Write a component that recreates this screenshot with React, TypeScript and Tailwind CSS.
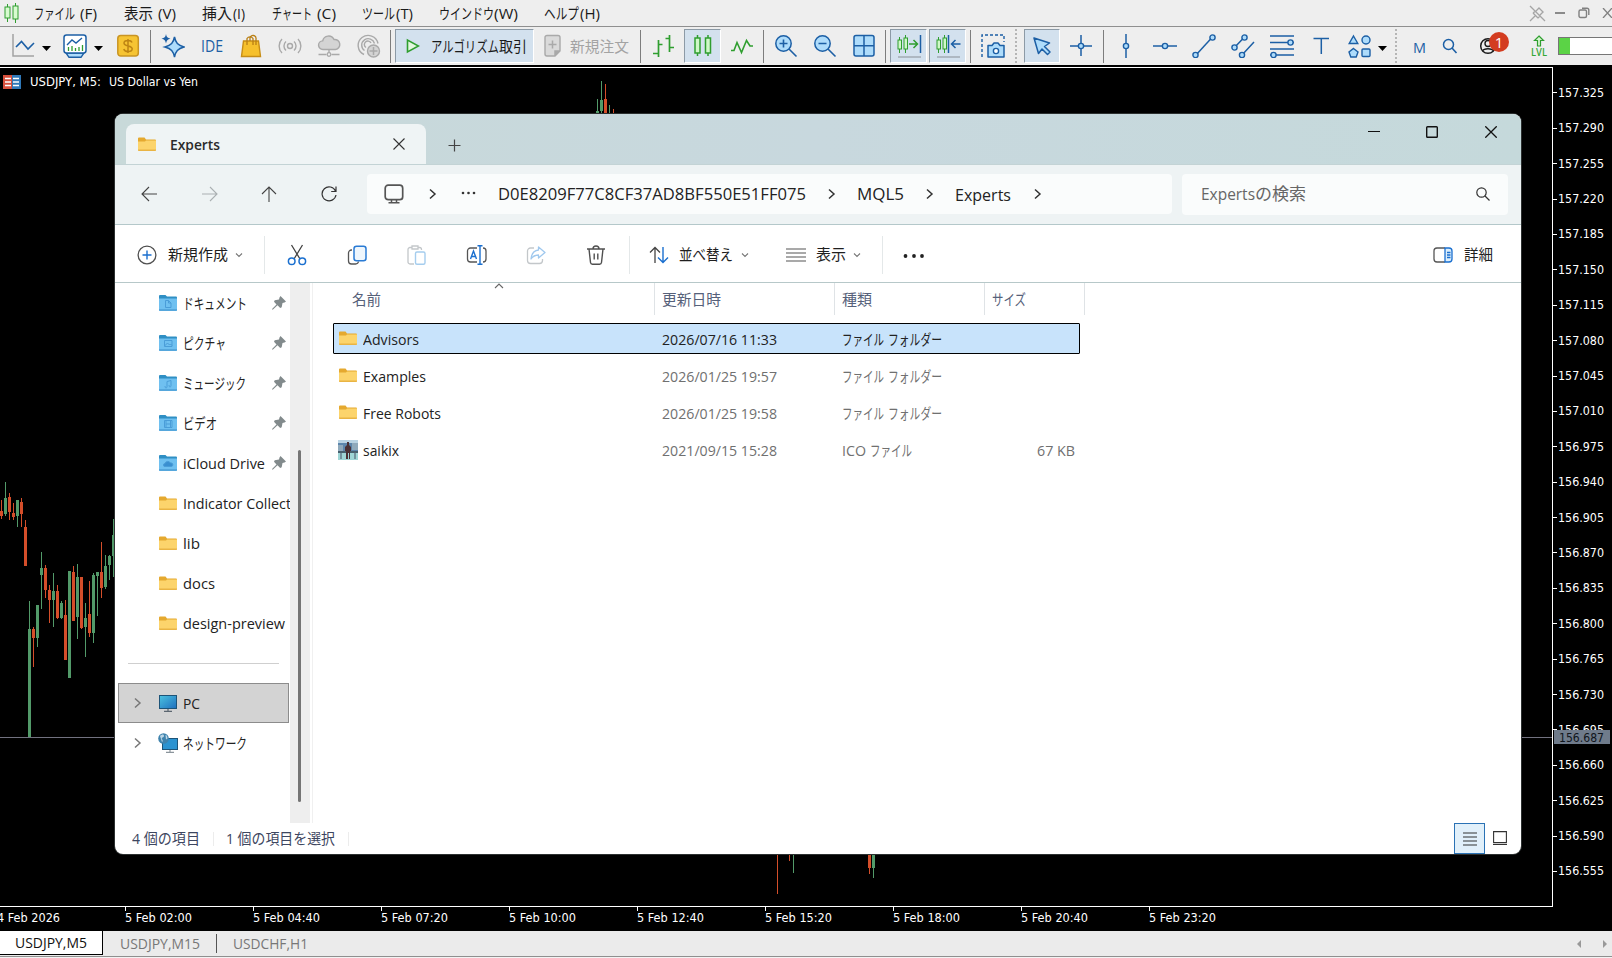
import { useLayoutEffect, useRef, useState } from 'react';
import type { ReactNode } from 'react';

// Squeezes a run of text into a fixed width, like the narrow UI kana on Windows
function Fit({ w, children, className = '' }: { w: number; children: ReactNode; className?: string }) {
  const ref = useRef<HTMLSpanElement>(null);
  const [scale, setScale] = useState(1);

  useLayoutEffect(() => {
    if (ref.current && ref.current.offsetWidth > 0) {
      setScale(w / ref.current.getBoundingClientRect().width);
    }
  }, [w]);

  return (
    <span className={`block shrink-0 whitespace-nowrap ${className}`} style={{ width: w }}>
      <span ref={ref} className="inline-block origin-left" style={{ transform: `scaleX(${scale})` }}>
        {children}
      </span>
    </span>
  );
}

function Ico({ children, className = '', w = 24, h = 24 }: { children: ReactNode; className?: string; w?: number; h?: number }) {
  return (
    <svg width={w} height={h} viewBox={`0 0 ${w} ${h}`} fill="none" className={`block shrink-0 ${className}`}>
      {children}
    </svg>
  );
}

const BLUE = '#1c5fa5';
const SKY = '#aedcfb';
const GREEN = '#2f9e2f';
const GRAY = '#a9a9a9';

/* ---------- terminal menu + toolbar ---------- */

const menus = [
  { ml: 'ml-[12px]', label: 'ファイル', w: 41, gap: 'ml-[5px]', key: '(F)', kw: 17 },
  { ml: 'ml-[27px]', label: '表示', w: 29, gap: 'ml-[5px]', key: '(V)', kw: 18 },
  { ml: 'ml-[26px]', label: '挿入', w: 30, gap: 'ml-[1px]', key: '(I)', kw: 12 },
  { ml: 'ml-[27px]', label: 'チャート', w: 40, gap: 'ml-[5px]', key: '(C)', kw: 19 },
  { ml: 'ml-[26px]', label: 'ツール', w: 33, gap: 'ml-[1px]', key: '(T)', kw: 17 },
  { ml: 'ml-[26px]', label: 'ウインドウ', w: 55, gap: 'ml-[0px]', key: '(W)', kw: 24 },
  { ml: 'ml-[26px]', label: 'ヘルプ', w: 35, gap: 'ml-[1px]', key: '(H)', kw: 20 },
];

function MenuBar() {
  return (
    <div className="flex h-[26px] shrink-0 items-center bg-[#eeeeee] text-[15px] text-[#1a1a1a]">
      <Ico w={16} h={20} className="ml-[4px]">
        <path d="M3.5 1v18M11.5 0v20" stroke={GREEN} />
        <rect x="1" y="4" width="5" height="11" fill="#d8fbd0" stroke={GREEN} />
        <rect x="9" y="3" width="5" height="13" fill="#d8fbd0" stroke={GREEN} />
      </Ico>
      <div className="flex items-center">
        {menus.map((m, i) => (
          <div key={m.label} className={`flex items-center ${i === 0 ? 'ml-[14px]' : m.ml}`}>
            <Fit w={m.w}>{m.label}</Fit>
            <Fit w={m.kw} className={m.gap}>{m.key}</Fit>
          </div>
        ))}
      </div>
      <div className="ml-auto flex items-center">
        <Ico w={17} h={17}>
          <path d="M1 1l15 15M1 16l5-5M4 8l5 5M9.500 2.500l5 5M7 6l3-3M11 10l3-3M6 6L4 8.500M11 11l-2 2" stroke="#a5a5a5" strokeWidth="1.300" />
        </Ico>
        <div className="ml-[9px] h-[1.500px] w-[10px] bg-[#8a8a8a]" />
        <Ico w={12} h={12} className="ml-[13px]">
          <rect x="1" y="3" width="7.500" height="7.500" rx="1.500" stroke="#808080" strokeWidth="1.400" />
          <path d="M4 1.200h5a1.800 1.800 0 0 1 1.800 1.800v5" stroke="#808080" strokeWidth="1.400" />
        </Ico>
        <Ico w={10} h={10} className="ml-[12px]">
          <path d="M1 0l9 10M10 0l-9 10" stroke="#808080" strokeWidth="1.300" />
        </Ico>
      </div>
    </div>
  );
}

const Sep = ({ ml }: { ml: string }) => <div className={`h-[33px] w-px shrink-0 bg-[#7d7d7d] ${ml}`} />;
const Dots = ({ ml }: { ml: string }) => (
  <div className={`h-[34px] w-0 shrink-0 border-l-2 border-dotted border-[#b5b5b5] ${ml}`} />
);
const Drop = ({ ml }: { ml: string }) => (
  <Ico w={9} h={5} className={`mt-[5px] ${ml}`}>
    <path d="M0 0h9L4.500 5z" fill="#000" />
  </Ico>
);
const Pressed = ({ children, className }: { children: ReactNode; className: string }) => (
  <div className={`flex h-[34px] shrink-0 items-center border border-t-[#8c9aa6] border-l-[#8c9aa6] border-r-white border-b-white bg-[#d3e1ee] ${className}`}>
    {children}
  </div>
);

function ToolBar() {
  return (
    <div className="flex h-[39px] shrink-0 items-center border-t border-[#8f8f8f] bg-[#eeeeee] text-[15px]">
      <Ico className="ml-[11px]">
        <path d="M2 0v22h21" stroke="#a3a3a3" strokeWidth="1.500" />
        <path d="M5 13l5.500-5.500 6.500 7.500 6-6" stroke={BLUE} strokeWidth="1.600" />
      </Ico>
      <Drop ml="ml-[7px]" />
      <Ico className="ml-[12px]">
        <path d="M3 19h18l-3 4.300H6z" fill={SKY} stroke={BLUE} strokeWidth="1.400" />
        <rect x="1" y="1" width="22" height="18" rx="2.500" fill="#fff" stroke={BLUE} strokeWidth="1.500" />
        <path d="M4 11l5-5 4 3 6-5" stroke={BLUE} strokeWidth="1.400" />
        <path d="M5.500 13v4M9 12v5M12.500 14v3M16 13v4M19.500 11v6" stroke={GREEN} strokeWidth="1.300" />
      </Ico>
      <Drop ml="ml-[7px]" />
      <Ico className="ml-[13px]">
        <rect x="1.800" y="1.500" width="20.500" height="20.500" rx="3" fill="#f6c433" stroke="#c99524" strokeWidth="1.500" />
        <path d="M12 5v14M16 8.500c-.5-1.400-2-2-4-2-2.200 0-4 .8-4 2.600 0 3.800 8.200 1.800 8.200 5.600 0 2-1.800 2.800-4.200 2.800-2.200 0-3.800-.8-4.200-2.500" stroke="#bd8413" strokeWidth="1.500" />
      </Ico>
      <Sep ml="ml-[10px]" />
      <Ico className="ml-[10px]">
        <path d="M13.500 3c1.200 6 3.200 8.300 9.500 10-6.300 1.700-8.300 4-9.500 10-1.200-6-3.200-8.300-9.500-10 6.300-1.700 8.300-4 9.500-10z" fill={SKY} stroke={BLUE} strokeWidth="1.500" />
        <path d="M5 0c.5 3 1.500 4 4.500 4.700C6.500 5.400 5.500 6.500 5 9.500 4.500 6.500 3.500 5.400.5 4.700 3.500 4 4.500 3 5 0z" fill={BLUE} />
      </Ico>
      <Fit w={22} className="ml-[16px] text-[17px] text-[#1c5fa5]">IDE</Fit>
      <Ico className="ml-[16px]">
        <path d="M4.500 7h15l2 15.500h-19z" fill="#f6c02c" stroke="#c78d16" strokeWidth="1.400" />
        <path d="M8 11V4.500a3.500 3.500 0 0 1 6 0V11M11 7V4a3 3 0 0 1 6 1v6" stroke="#b97f14" strokeWidth="1.300" />
      </Ico>
      <Ico className="ml-[15px]">
        <circle cx="12" cy="12" r="2.500" stroke={GRAY} strokeWidth="1.400" />
        <path d="M8 7.500a6 6 0 0 0 0 9M16 7.500a6 6 0 0 1 0 9M4 5a10 10 0 0 0 0 14M20 5a10 10 0 0 1 0 14" stroke={GRAY} strokeWidth="1.400" />
      </Ico>
      <Ico className="ml-[15px]">
        <path d="M6 15.500a4.300 4.300 0 0 1-.3-8.600A6 6 0 0 1 17 5.500a5 5 0 0 1 1.500 10z" fill="#d4d4d4" stroke={GRAY} strokeWidth="1.400" />
        <path d="M12 15.500V19M1.500 20.500h8M14.500 20.500h8" stroke={GRAY} strokeWidth="1.400" />
        <circle cx="12" cy="20.500" r="1.800" stroke={GRAY} strokeWidth="1.300" />
      </Ico>
      <Ico className="ml-[16px]">
        <path d="M21 9.500A10 10 0 1 0 7 20.500M17.500 9.500A6.500 6.500 0 1 0 7.500 16.500M14 9a3.500 3.500 0 1 0-5 4.500" stroke={GRAY} strokeWidth="1.400" />
        <circle cx="16.500" cy="17" r="6" fill="#d4d4d4" stroke={GRAY} strokeWidth="1.400" />
        <path d="M12.500 17h8M16.500 13v8" stroke={GRAY} strokeWidth="1.500" />
      </Ico>
      <Sep ml="ml-[9px]" />
      <Pressed className="ml-[4px] w-[139px] text-[#1a1a1a]">
        <Ico w={14} h={16} className="ml-[10px]">
          <path d="M1.500 2v12l11-6z" fill="#e3f8df" stroke={GREEN} strokeWidth="1.600" />
        </Ico>
        <Fit w={68} className="ml-[11px]">アルゴリズム</Fit>
        <Fit w={28}>取引</Fit>
      </Pressed>
      <Ico className="ml-[7px]">
        <path d="M6 1.500h11a2 2 0 0 1 2 2V17l-5 5H6a2 2 0 0 1-2-2V3.500a2 2 0 0 1 2-2z" fill="#dadada" stroke={GRAY} strokeWidth="1.400" />
        <path d="M19 17h-5v5M7.500 10.500h8M11.500 6.500v8" stroke={GRAY} strokeWidth="1.500" />
        <path d="M14 17h5l-5 5z" fill={GRAY} />
      </Ico>
      <Fit w={59} className="ml-[5px] text-[#a3a3a3]">新規注文</Fit>
      <Sep ml="ml-[11px]" />
      <Ico className="ml-[11px]">
        <path d="M6.500 6v17M1 19.500h5.500M6.500 10.500h4M17.500 1v17M13.500 4.500h4M17.500 13.500h4.500" stroke={GREEN} strokeWidth="1.700" />
      </Ico>
      <Pressed className="ml-[8px] w-[37px] justify-center">
        <Ico>
          <path d="M6.500 1v21M17 1v21" stroke={GREEN} strokeWidth="1.500" />
          <rect x="4" y="4" width="5" height="15" fill="#cff8c8" stroke={GREEN} strokeWidth="1.500" />
          <rect x="14.500" y="4" width="5" height="15" fill="#cff8c8" stroke={GREEN} strokeWidth="1.500" />
        </Ico>
      </Pressed>
      <Ico className="ml-[9px]">
        <path d="M1 16.500h3l3-8 4.500 10 5-12 3.500 5.500h3" stroke={GREEN} strokeWidth="1.600" />
      </Ico>
      <Sep ml="ml-[9px]" />
      <Ico className="ml-[10px]">
        <circle cx="9.500" cy="9.500" r="7.700" fill={SKY} stroke={BLUE} strokeWidth="1.500" />
        <path d="M15 15l7.500 7.500M5.500 9.500h8M9.500 5.500v8" stroke={BLUE} strokeWidth="1.600" />
      </Ico>
      <Ico className="ml-[15px]">
        <circle cx="9.500" cy="9.500" r="7.700" fill={SKY} stroke={BLUE} strokeWidth="1.500" />
        <path d="M15 15l7.500 7.500M5.500 9.500h8" stroke={BLUE} strokeWidth="1.600" />
      </Ico>
      <Ico className="ml-[15px]">
        <rect x="2" y="1.500" width="20" height="20.500" rx="2" fill={SKY} stroke={BLUE} strokeWidth="1.500" />
        <path d="M12 1.500V22M2 11.700h20" stroke={BLUE} strokeWidth="1.500" />
      </Ico>
      <Sep ml="ml-[9px]" />
      <Pressed className="ml-[4px] w-[37px] justify-center">
        <Ico w={26}>
          <path d="M3.500 3v16M9.500 1v18" stroke={GREEN} />
          <rect x="2" y="6" width="3.500" height="9" fill="#cff8c8" stroke={GREEN} />
          <rect x="8" y="4" width="3.500" height="11" fill="#cff8c8" stroke={GREEN} />
          <path d="M13 10h8M17.500 6l4 4-4 4" stroke={GREEN} strokeWidth="1.500" />
          <path d="M24.500 1v18" stroke={BLUE} strokeWidth="1.500" />
          <path d="M2 23h23" stroke="#9aa2aa" strokeWidth="1.300" />
        </Ico>
      </Pressed>
      <Pressed className="ml-[2px] w-[37px] justify-center">
        <Ico w={26}>
          <path d="M3.500 3v16M9.500 1v18" stroke={GREEN} />
          <rect x="2" y="6" width="3.500" height="9" fill="#cff8c8" stroke={GREEN} />
          <rect x="8" y="4" width="3.500" height="11" fill="#cff8c8" stroke={GREEN} />
          <path d="M13.500 1v18M17 10h8.500M20.500 6l-4 4 4 4" stroke={BLUE} strokeWidth="1.500" />
          <path d="M2 23h23" stroke="#9aa2aa" strokeWidth="1.300" />
        </Ico>
      </Pressed>
      <Sep ml="ml-[4px]" />
      <Ico className="ml-[10px]">
        <path d="M1 23V1h22v7" stroke={BLUE} strokeWidth="1.400" strokeDasharray="3 2" />
        <path d="M7 11.500h4l2-2.500h4l2 2.500h4v11.500H7z" fill={SKY} stroke={BLUE} strokeWidth="1.500" strokeLinejoin="round" />
        <circle cx="15" cy="17" r="2.600" fill="#fff" stroke={BLUE} strokeWidth="1.400" />
      </Ico>
      <Dots ml="ml-[10px]" />
      <Pressed className="ml-[7px] w-[36px] justify-center">
        <Ico>
          <path d="M4 4l15.500 5-5 3.500 5.500 5.500-2.500 2.500-5.500-5.500L8.500 19.500z" fill={SKY} stroke={BLUE} strokeWidth="1.500" strokeLinejoin="round" />
        </Ico>
      </Pressed>
      <Ico className="ml-[9px]">
        <path d="M12 1v21M1 12h22" stroke={BLUE} strokeWidth="1.500" />
        <circle cx="12" cy="12" r="2.600" fill={SKY} stroke={BLUE} strokeWidth="1.400" />
      </Ico>
      <Sep ml="ml-[10px]" />
      <Ico className="ml-[10px]">
        <path d="M12 0v24" stroke={BLUE} strokeWidth="1.500" />
        <circle cx="12" cy="12" r="2.600" fill={SKY} stroke={BLUE} strokeWidth="1.400" />
      </Ico>
      <Ico className="ml-[15px]">
        <path d="M0 12h24" stroke={BLUE} strokeWidth="1.500" />
        <circle cx="12" cy="12" r="2.600" fill={SKY} stroke={BLUE} strokeWidth="1.400" />
      </Ico>
      <Ico className="ml-[15px]">
        <path d="M4 21L20 3.500" stroke={BLUE} strokeWidth="1.500" />
        <circle cx="3.500" cy="21" r="2.600" fill={SKY} stroke={BLUE} strokeWidth="1.400" />
        <circle cx="20.500" cy="3.500" r="2.600" fill={SKY} stroke={BLUE} strokeWidth="1.400" />
      </Ico>
      <Ico className="ml-[15px]">
        <path d="M3.500 13.500L13.500 3M11 21L23 8" stroke={BLUE} strokeWidth="1.500" />
        <circle cx="3.500" cy="13.500" r="2.600" fill={SKY} stroke={BLUE} strokeWidth="1.400" />
        <circle cx="13.500" cy="3.500" r="2.600" fill={SKY} stroke={BLUE} strokeWidth="1.400" />
        <circle cx="11" cy="21" r="2.600" fill={SKY} stroke={BLUE} strokeWidth="1.400" />
      </Ico>
      <Ico className="ml-[15px]">
        <path d="M0 2h24M0 8.500h24M0 15h24M0 21h24" stroke={BLUE} strokeWidth="1.500" />
        <circle cx="20.500" cy="8.500" r="2.600" fill={SKY} stroke={BLUE} strokeWidth="1.400" />
        <circle cx="3.500" cy="21" r="2.600" fill={SKY} stroke={BLUE} strokeWidth="1.400" />
      </Ico>
      <Ico className="ml-[15px]">
        <path d="M4.500 4.500h15.500M12.300 4.500V20" stroke={BLUE} strokeWidth="1.500" />
      </Ico>
      <Ico className="ml-[15px]">
        <path d="M5.500 2l4.300 7.500H1.200z" fill={SKY} stroke={BLUE} strokeWidth="1.400" />
        <circle cx="18" cy="6" r="4" fill={SKY} stroke={BLUE} strokeWidth="1.400" />
        <path d="M5.500 14.500l4.500 3.500-1.800 5H2.800L1 18z" fill={SKY} stroke={BLUE} strokeWidth="1.400" />
        <rect x="14" y="15" width="8" height="7.500" rx="1" fill={SKY} stroke={BLUE} strokeWidth="1.400" />
      </Ico>
      <Drop ml="ml-[6px]" />
      <Dots ml="ml-[8px]" />
      <Fit w={13} className="mt-[3px] ml-[16px] text-[#1c5fa5]">M</Fit>
      <Ico w={16} h={16} className="ml-[16px]">
        <circle cx="6.500" cy="6.500" r="5" stroke={BLUE} strokeWidth="1.500" />
        <path d="M10 10l4.500 5" stroke={BLUE} strokeWidth="1.600" />
      </Ico>
      <div className="relative ml-[21px] h-[24px] w-[30px] shrink-0">
        <Ico w={18} className="mt-[1px]">
          <circle cx="9" cy="11" r="7.300" stroke="#1b1b1b" strokeWidth="1.500" />
          <circle cx="9" cy="8.500" r="3" stroke="#1b1b1b" strokeWidth="1.400" />
          <path d="M3.500 16c1.500-3 9.500-3 11 0" stroke="#1b1b1b" strokeWidth="1.400" />
        </Ico>
        <div className="absolute -top-[2px] left-[10px] flex h-[20px] w-[20px] items-center justify-center rounded-full bg-[#d33c20] text-[15px] leading-none text-white">1</div>
      </div>
      <div className="ml-[21px] flex w-[17px] shrink-0 flex-col items-center">
        <Ico w={12} h={12}>
          <path d="M6 1l4.500 4.500h-3V11h-3V5.500h-3z" fill="#d6f7cf" stroke={GREEN} strokeWidth="1.200" />
        </Ico>
        <Fit w={16} className="text-[11px] leading-[10px] font-semibold text-[#35a835]">LVL</Fit>
      </div>
      <div className="ml-[11px] flex h-[18px] flex-1 border border-r-0 border-[#767676] bg-white">
        <div className="w-[11px] bg-[#5bd346]" />
      </div>
    </div>
  );
}

/* ---------- chart ---------- */

// [slot, wick top, wick bottom, body top, body bottom, rising]
const candles: [number, number, number, number, number, boolean][] = [
  [0, 500, 519, 511, 516, false],
  [1, 482, 516, 498, 514, true],
  [2, 493, 520, 497, 512, false],
  [3, 503, 520, 513, 517, false],
  [4, 500, 527, 500, 516, true],
  [5, 498, 527, 502, 514, false],
  [6, 520, 566, 527, 566, false],
  [7, 601, 737, 629, 737, true],
  [8, 627, 667, 629, 638, false],
  [9, 605, 647, 605, 638, true],
  [10, 552, 609, 568, 575, true],
  [11, 565, 598, 568, 590, false],
  [12, 585, 623, 590, 600, false],
  [13, 573, 627, 591, 600, true],
  [14, 585, 619, 591, 618, false],
  [15, 601, 619, 603, 618, true],
  [16, 600, 660, 615, 660, false],
  [17, 571, 678, 571, 678, true],
  [18, 566, 621, 572, 621, false],
  [19, 564, 639, 577, 617, true],
  [20, 577, 629, 577, 628, false],
  [21, 603, 657, 618, 627, true],
  [22, 581, 637, 614, 633, false],
  [23, 573, 643, 575, 633, true],
  [24, 572, 616, 572, 576, true],
  [25, 542, 598, 572, 588, false],
  [26, 555, 589, 566, 587, true],
  [27, 555, 580, 556, 565, true],
  [28, 519, 577, 535, 556, true],
  [149, 99, 130, 111, 130, true],
  [150, 81, 130, 100, 111, true],
  [151, 84, 130, 99, 130, false],
  [152, 105, 130, 125, 130, true],
  [153, 109, 130, 125, 130, false],
  [194, 820, 894, 820, 840, false],
  [197, 820, 861, 820, 840, false],
  [198, 820, 873, 820, 840, true],
  [217, 820, 874, 820, 868, false],
  [218, 820, 878, 820, 868, true],
];

const CHART_TOP = 67;
const prices = Array.from({ length: 23 }, (_, i) => (157.325 - i * 0.035).toFixed(3));
const times = ['02:00', '04:40', '07:20', '10:00', '12:40', '15:20', '18:00', '20:40', '23:20'];

function Chart() {
  return (
    <div className="flex h-[866px] shrink-0 flex-col bg-black pt-[2px] font-['DejaVu_Sans_Condensed','DejaVu_Sans',sans-serif] text-[12px] text-white">
      <div className="flex h-[840px] shrink-0">
        <div className="relative w-[1553px] shrink-0 border-t border-r border-b border-white">
          <div className="flex items-center pt-[5px]">
            <Ico w={18} h={14} className="-mt-px ml-[3px]">
              <rect x="0" y="0" width="9" height="14" fill="#d8503c" />
              <rect x="9" y="0" width="9" height="14" fill="#2f78b8" />
              <path d="M2 3.500h6M2 7h6M2 10.500h6M10 3.500h6M10 7h6M10 10.500h6" stroke="#fff" strokeWidth="1.600" />
            </Ico>
            <Fit w={71} className="ml-[9px]">USDJPY, M5:</Fit>
            <Fit w={89} className="ml-[8px]">US Dollar vs Yen</Fit>
          </div>
          <svg className="absolute top-0 left-0" width="1552" height="838" shapeRendering="crispEdges">
            <g transform={`translate(0 ${-CHART_TOP - 1})`}>
              <rect x="0" y="737" width="1552" height="1" fill="#71717f" />
              {candles.map(([i, wt, wb, bt, bb, up]) => (
                <g key={i} fill={up ? '#529a69' : '#d44e2a'}>
                  <rect x={i * 4 + 1} y={wt} width="1" height={wb - wt} />
                  <rect x={i * 4} y={bt} width="3" height={bb - bt} />
                </g>
              ))}
            </g>
          </svg>
        </div>
        <div className="relative flex-1 overflow-hidden pt-[8.200px]">
          {prices.map((p) => (
            <div key={p} className="flex h-[35.4px] items-center">
              <div className="h-px w-[4px] bg-white" />
              <Fit w={46} className="ml-px">{p}</Fit>
            </div>
          ))}
          <div className="absolute top-[663px] left-[1px] flex h-[14px] w-[56px] items-center bg-[#6f7b8b] pt-[2px] pl-[5px] text-[#10151c]">
            <Fit w={45}>156.687</Fit>
          </div>
        </div>
      </div>
      <div className="flex overflow-hidden">
        <div className="w-[125px] shrink-0 pt-[3px] leading-[16px]">
          <Fit w={63} className="-ml-[3px]">4 Feb 2026</Fit>
        </div>
        {times.map((t) => (
          <div key={t} className="w-[128px] shrink-0">
            <div className="h-[4px] w-px bg-white" />
            <Fit w={67} className="-mt-px leading-[16px]">5 Feb {t}</Fit>
          </div>
        ))}
      </div>
    </div>
  );
}

function ChartTabs() {
  return (
    <div className="flex h-[26px] shrink-0 border-b border-[#8f8f8f] bg-[#ebebeb] text-[15px] text-[#777]">
      <div className="flex h-[24px] w-[103px] items-center border-r border-b border-black bg-white pl-[15px] text-[#111]">
        <Fit w={72}>USDJPY,M5</Fit>
      </div>
      <div className="flex h-[24px] items-center pl-[17px]">
        <Fit w={80}>USDJPY,M15</Fit>
        <div className="ml-[16px] h-[19px] w-px bg-[#555]" />
        <Fit w={75} className="ml-[16px]">USDCHF,H1</Fit>
      </div>
      <div className="ml-auto flex items-center gap-[22px] pr-[5px]">
        <Ico w={4} h={8}><path d="M4 0v8L0 4z" fill="#999" /></Ico>
        <Ico w={4} h={8}><path d="M0 0v8l4-4z" fill="#999" /></Ico>
      </div>
    </div>
  );
}

/* ---------- explorer window ---------- */

function Folder({ className = '' }: { className?: string }) {
  return (
    <Ico w={18} h={15} className={className}>
      <path d="M0 1.500A1 1 0 0 1 1 .5h5.500L8 2.500h9a1 1 0 0 1 1 1V8H0z" fill="#e5a92f" />
      <path d="M0 4.500h7l1-1h10V13a1 1 0 0 1-1 1H1a1 1 0 0 1-1-1z" fill="#fcd46c" />
      <path d="M0 12.500h18v.5a1 1 0 0 1-1 1H1a1 1 0 0 1-1-1z" fill="#e9b444" />
    </Ico>
  );
}

function BlueFolder({ kind }: { kind: string }) {
  return (
    <Ico w={18} h={16}>
      <path d="M0 1A1 1 0 0 1 1 0h5.500L8 1.500h9a1 1 0 0 1 1 1V8H0z" fill="#2f8fc4" />
      <path d="M0 3.500h18V15a1 1 0 0 1-1 1H1a1 1 0 0 1-1-1z" fill="#6fc0f0" />
      <path d="M0 14h18v1a1 1 0 0 1-1 1H1a1 1 0 0 1-1-1z" fill="#56a7dc" />
      <g stroke="#4a9dd8" strokeWidth="1">
        {kind === 'doc' && <path d="M6.500 5.500h3l2.500 2.500v4.500H6.500zM9.500 5.500V8H12" />}
        {kind === 'pic' && <path d="M5.500 5.500h7.500v6H5.500zM5.500 11l3-3 2 2 1-1 1.500 1.500" />}
        {kind === 'music' && <path d="M8 11.500V6.500l4-1v5M8 11.500a1 1 0 1 1-1.500-.5M12 10.500a1 1 0 1 1-1.500-.5" />}
        {kind === 'video' && <path d="M5.500 5.500h7.500v7H5.500zM7 5.500v7M11.500 5.500v7M7 9h4.500" />}
        {kind === 'cloud' && <path d="M6 11.500a1.500 1.500 0 0 1 0-3 3 3 0 0 1 5.500-.5 1.800 1.800 0 0 1 1 3.500z" fill="#3a8fd0" />}
      </g>
    </Ico>
  );
}

function Monitor() {
  return (
    <Ico w={18} h={17}>
      <defs>
        <linearGradient id="screen" x1="0" y1="0" x2="1" y2="1">
          <stop offset="0" stopColor="#4cc3e0" />
          <stop offset="1" stopColor="#1f6fbe" />
        </linearGradient>
      </defs>
      <rect x=".5" y=".5" width="17" height="13" fill="url(#screen)" stroke="#1d5478" />
      <path d="M9 14v2M5 16.300h8" stroke="#5b6670" strokeWidth="1.200" />
    </Ico>
  );
}

function NetworkIcon() {
  return (
    <Ico w={20} h={20}>
      <rect x="4.500" y="5.500" width="15" height="11" fill="#2b93d1" stroke="#1d5478" />
      <path d="M12 17v2M8 19.300h8" stroke="#8b959c" strokeWidth="1.200" />
      <circle cx="5.500" cy="5.500" r="5.300" fill="#3f83ad" />
      <path d="M2 3c2-2 4-2 4 0s-3 1-2 3 1 2 0 3M7.500 2c1.500 0 2 2 2 3.500L8 6.500z" fill="#bcd6e6" />
    </Ico>
  );
}

const Pin = () => (
  <Ico w={14} h={14} className="ml-auto">
    <path d="M8.500 0L14 5.500l-1.500 1L10.500 7l-.8 4.300-1.500.7L5.500 9.200 1 13.500H0V13l4.500-4.500L2 5.800l.7-1.500L7 3.500l.5-2z" fill="#828a8c" />
  </Ico>
);

const Chevron = ({ className = '', color = '#333' }: { className?: string; color?: string }) => (
  <Ico w={8} h={12} className={className}>
    <path d="M1 1.500L6 6l-5 4.500" stroke={color} strokeWidth="1.500" />
  </Ico>
);
const ChevronDown = ({ className = '' }: { className?: string }) => (
  <Ico w={8} h={6} className={className}>
    <path d="M1 1.500l3 3 3-3" stroke="#777" strokeWidth="1.100" />
  </Ico>
);

function TitleBar() {
  return (
    <div className="flex h-[50px] shrink-0 bg-linear-to-r from-[#c8d9d9] via-[#c8d8de] to-[#c5d9db]">
      <div className="mt-[10px] ml-[11px] flex w-[300px] items-center rounded-t-lg bg-[#eff4f5]">
        <Folder className="ml-[12px]" />
        <Fit w={50} className="ml-[14px] text-[15px] font-semibold text-[#2a2a2a]">Experts</Fit>
        <Ico w={12} h={12} className="ml-[173px]">
          <path d="M.5.500l11 11M11.500.500l-11 11" stroke="#333" strokeWidth="1.100" />
        </Ico>
      </div>
      <Ico w={13} h={13} className="mt-[25px] ml-[22px]">
        <path d="M6.500.500v12M.500 6.500h12" stroke="#444" strokeWidth="1.200" />
      </Ico>
      <div className="ml-auto flex h-[36px] items-center pr-[24px]">
        <Ico w={12} h={12}><path d="M0 5.500h12" stroke="#111" strokeWidth="1" /></Ico>
        <Ico w={12} h={12} className="ml-[46px]">
          <rect x=".7" y=".7" width="10.600" height="10.600" rx=".8" stroke="#111" strokeWidth="1.400" />
        </Ico>
        <Ico w={12} h={12} className="ml-[47px]">
          <path d="M.3.300l11.400 11.400M11.700.300L.3 11.700" stroke="#111" strokeWidth="1.300" />
        </Ico>
      </div>
    </div>
  );
}

function NavBar() {
  return (
    <div className="flex h-[61px] shrink-0 items-center border-t border-b border-[#b4c8ca] border-t-[#c3d3d5] bg-[#eef3f4] pb-px text-[17px] text-[#222]">
      <Ico w={16} h={16} className="ml-[26px]">
        <path d="M16 8H1.500M8 1L1 8l7 7" stroke="#444" strokeWidth="1.100" />
      </Ico>
      <Ico w={16} h={16} className="ml-[45px]">
        <path d="M0 8h14.500M8 1l7 7-7 7" stroke="#aab0b2" strokeWidth="1.100" />
      </Ico>
      <Ico w={16} h={16} className="ml-[43px]">
        <path d="M8 16V1.500M1 8l7-7 7 7" stroke="#444" strokeWidth="1.100" />
      </Ico>
      <Ico w={16} h={16} className="ml-[44px]">
        <path d="M14.500 5A7 7 0 1 0 15 9M15 .5V5.500H10.200" stroke="#333" strokeWidth="1.200" />
      </Ico>
      <div className="ml-[30px] flex h-[40px] w-[805px] shrink-0 items-center rounded-[4px] bg-[#fafcfc]">
        <Ico w={20} h={20} className="ml-[17px]">
          <rect x="1.200" y="1.200" width="17.500" height="14.500" rx="3" stroke="#555" strokeWidth="1.700" />
          <path d="M7.500 16v2.500M12.500 16v2.500M4.500 18.800h11" stroke="#555" strokeWidth="1.500" />
        </Ico>
        <Chevron className="ml-[25px]" />
        <Ico w={15} h={4} className="-mt-[2px] ml-[24px]">
          <circle cx="2" cy="2" r="1.300" fill="#333" /><circle cx="7.500" cy="2" r="1.300" fill="#333" /><circle cx="13" cy="2" r="1.300" fill="#333" />
        </Ico>
        <Fit w={308} className="-mt-px ml-[22px]">D0E8209F77C8CF37AD8BF550E51FF075</Fit>
        <Chevron className="ml-[22px]" />
        <Fit w={47} className="-mt-px ml-[21px]">MQL5</Fit>
        <Chevron className="ml-[22px]" />
        <Fit w={56} className="mt-px ml-[21px]">Experts</Fit>
        <Chevron className="ml-[23px]" />
      </div>
      <div className="ml-[10px] flex h-[41px] w-[326px] shrink-0 items-center rounded-[4px] bg-[#fafcfc] text-[#666]">
        <Fit w={54} className="ml-[19px]">Experts</Fit>
        <Fit w={51}>の検索</Fit>
        <Ico w={14} h={14} className="mr-[18px] ml-auto">
          <circle cx="5.500" cy="5.500" r="4.700" stroke="#333" strokeWidth="1.200" />
          <path d="M9 9l4.500 4.500" stroke="#333" strokeWidth="1.300" />
        </Ico>
      </div>
    </div>
  );
}

const Divider = ({ className }: { className: string }) => <div className={`h-[38px] w-px shrink-0 bg-[#e4e8e9] ${className}`} />;

function CommandBar() {
  return (
    <div className="flex h-[58px] shrink-0 items-center border-b border-[#b7c8c9] bg-white pt-[2px] text-[15px] text-[#1f1f1f]">
      <Ico w={20} h={20} className="ml-[22px]">
        <circle cx="10" cy="10" r="8.900" stroke="#505050" strokeWidth="1.300" />
        <path d="M5.500 10h9M10 5.500v9" stroke="#1a6fcf" strokeWidth="1.400" />
      </Ico>
      <Fit w={60} className="ml-[11px]">新規作成</Fit>
      <ChevronDown className="ml-[7px]" />
      <Divider className="ml-[21px]" />
      <Ico w={20} h={22} className="ml-[22px]">
        <path d="M4.500 1l8.500 14M15.500 1L7 15" stroke="#444" strokeWidth="1.300" />
        <circle cx="4.700" cy="17.200" r="3.300" stroke="#1a6fcf" strokeWidth="1.500" />
        <circle cx="15.300" cy="17.200" r="3.300" stroke="#1a6fcf" strokeWidth="1.500" />
      </Ico>
      <Ico w={20} h={20} className="ml-[40px]">
        <path d="M5 5H4.500A3 3 0 0 0 1.500 8v8a3 3 0 0 0 3 3h4a3 3 0 0 0 3-2.500" stroke="#555" strokeWidth="1.300" />
        <rect x="7" y="1.200" width="12" height="14.500" rx="2.500" fill="#eef6fd" stroke="#2a7bd4" strokeWidth="1.500" />
      </Ico>
      <Ico w={20} h={20} className="ml-[39px]">
        <path d="M8 19H4a2 2 0 0 1-2-2V4.500a2 2 0 0 1 2-2h1.500M12 2.500h1.500a2 2 0 0 1 2 2V5M6 1h6v3H6z" stroke="#c3c7ca" strokeWidth="1.300" />
        <rect x="9.500" y="7" width="9.500" height="12.300" rx="1.500" stroke="#a5cdee" strokeWidth="1.400" />
      </Ico>
      <Ico w={21} h={20} className="ml-[40px]">
        <path d="M11 3H4.500a3 3 0 0 0-3 3v8a3 3 0 0 0 3 3H11M17 3a3 3 0 0 1 3 3v8a3 3 0 0 1-3 3" stroke="#555" strokeWidth="1.300" />
        <path d="M4.500 14L7.500 6l3 8M5.500 11.500h4M14 1v18M11.500 .8h5M11.500 19.200h5" stroke="#1a6fcf" strokeWidth="1.400" />
      </Ico>
      <Ico w={20} h={20} className="ml-[39px]">
        <path d="M8 3H4.500a3 3 0 0 0-3 3v9.500a3 3 0 0 0 3 3h9a3 3 0 0 0 3-3V14" stroke="#c3c7ca" strokeWidth="1.300" />
        <path d="M12.500 2l6.500 5.500-6.500 5.500V10c-3.500 0-5.500 1-7.500 4 .5-5 3-8.500 7.500-9z" stroke="#9fc8ee" strokeWidth="1.300" strokeLinejoin="round" />
      </Ico>
      <Ico w={20} h={20} className="ml-[40px]">
        <path d="M1 4h18M7 4a3 3 0 0 1 6 0M3 4l1.500 13.500a2 2 0 0 0 2 1.700h7a2 2 0 0 0 2-1.700L17 4M8.200 8.500v6M11.800 8.500v6" stroke="#505050" strokeWidth="1.400" />
      </Ico>
      <Divider className="ml-[23px]" />
      <Ico w={20} h={18} className="ml-[19px]">
        <path d="M6 17V1.500M1 6.500l5-5 5 5" stroke="#444" strokeWidth="1.300" />
        <path d="M14 1v15.500M9 11.500l5 5 5-5" stroke="#1a6fcf" strokeWidth="1.400" />
      </Ico>
      <Fit w={54} className="ml-[10px]">並べ替え</Fit>
      <ChevronDown className="ml-[8px]" />
      <Ico w={20} h={16} className="ml-[37px]">
        <path d="M0 2h20M0 6h20M0 10h20M0 14h20" stroke="#555" strokeWidth="1.200" />
      </Ico>
      <Fit w={30} className="ml-[10px]">表示</Fit>
      <ChevronDown className="ml-[7px]" />
      <Divider className="ml-[21px]" />
      <Ico w={22} h={4} className="mt-[2px] ml-[20px]">
        <circle cx="2.500" cy="2" r="1.900" fill="#222" /><circle cx="11" cy="2" r="1.900" fill="#222" /><circle cx="19" cy="2" r="1.900" fill="#222" />
      </Ico>
      <Ico w={20} h={16} className="ml-auto">
        <path d="M12 1H4a3 3 0 0 0-3 3v8a3 3 0 0 0 3 3h8" stroke="#555" strokeWidth="1.300" />
        <path d="M12 1h4a3 3 0 0 1 3 3v8a3 3 0 0 1-3 3h-4zM14 5.500h3.500M14 8h3.500M14 10.500h3.500" fill="#dceefb" stroke="#1a6fcf" strokeWidth="1.300" />
      </Ico>
      <Fit w={29} className="mr-[28px] ml-[11px]">詳細</Fit>
    </div>
  );
}

const sideItems = [
  { label: 'ドキュメント', w: 64, kind: 'doc' },
  { label: 'ピクチャ', w: 43, kind: 'pic' },
  { label: 'ミュージック', w: 63, kind: 'music' },
  { label: 'ビデオ', w: 34, kind: 'video' },
  { label: 'iCloud Drive', w: 82, kind: 'cloud' },
  { label: 'Indicator Collect', w: 108, kind: '' },
  { label: 'lib', w: 17, kind: '' },
  { label: 'docs', w: 32, kind: '' },
  { label: 'design-preview', w: 102, kind: '' },
];

function Sidebar() {
  return (
    <div className="flex w-[198px] shrink-0 border-r border-[#f0f0f0] text-[15px] text-[#222]">
      <div className="w-[175px] shrink-0 overflow-hidden">
        {sideItems.map((s) => (
          <div key={s.label} className="flex h-[40px] items-center pr-[4px] pl-[44px]">
            {s.kind ? <BlueFolder kind={s.kind} /> : <Folder />}
            <Fit w={s.w} className="ml-[6px]">{s.label}</Fit>
            {s.kind && <Pin />}
          </div>
        ))}
        <div className="mt-[20px] ml-[13px] h-px w-[151px] bg-[#cfcfcf]" />
        <div className="mt-[19px] ml-[3px] flex h-[40px] w-[171px] items-center border border-[#8c8c8c] bg-[#d3d3d3]">
          <Chevron className="ml-[15px]" color="#777" />
          <div className="ml-[17px]"><Monitor /></div>
          <Fit w={17} className="ml-[6px]">PC</Fit>
        </div>
        <div className="ml-[3px] flex h-[40px] items-center">
          <Chevron className="ml-[16px]" color="#777" />
          <div className="ml-[16px]"><NetworkIcon /></div>
          <Fit w={64} className="ml-[5px]">ネットワーク</Fit>
        </div>
      </div>
      <div className="h-full w-[20px] bg-[#eeeeee] pt-[167px] pl-[8px]">
        <div className="h-[352px] w-[3px] rounded bg-[#757575]" />
      </div>
    </div>
  );
}

type Row = { name: string; nw: number; date: string; type: [string, number][]; size?: string; selected?: boolean };

const folderType: [string, number][] = [['ファイル', 42], ['フォルダー', 54]];
const rows: Row[] = [
  { name: 'Advisors', nw: 56, date: '2026/07/16 11:33', type: folderType, selected: true },
  { name: 'Examples', nw: 63, date: '2026/01/25 19:57', type: folderType },
  { name: 'Free Robots', nw: 78, date: '2026/01/25 19:58', type: folderType },
  { name: 'saikix', nw: 36, date: '2021/09/15 15:28', type: [['ICO', 24], ['ファイル', 42]], size: '67 KB' },
];

function Thumb() {
  return (
    <Ico w={20} h={20}>
      <rect width="20" height="20" fill="#b9d3e3" />
      <rect y="3" width="20" height="8" fill="#5d86ac" />
      <path d="M0 5h5v6H0zM14 3h6v7h-6z" fill="#8fa9bb" />
      <rect y="12" width="20" height="8" fill="#9fd6d6" />
      <rect y="11" width="20" height="2" fill="#47606e" />
      <path d="M9 2h2v3l2 2v4h-1v8h-1v-6h-1v6H8v-8H7V7L9 5z" fill="#4a3034" />
      <path d="M3 13v6M17 12v7" stroke="#567" strokeWidth="1.200" />
    </Ico>
  );
}

function FileList() {
  return (
    <div className="flex-1 text-[15px]">
      <div className="flex h-[32px] text-[#56617a]">
        <div className="flex w-[342px] items-center border-r border-[#dfe3e6] pl-[39px]">
          <Fit w={29}>名前</Fit>
          <Ico w={10} h={6} className="mb-[26px] ml-[113px]">
            <path d="M1 5l4-4 4 4" stroke="#666" strokeWidth="1.100" />
          </Ico>
        </div>
        <div className="flex w-[180px] items-center border-r border-[#dfe3e6] pl-[7px]"><Fit w={59}>更新日時</Fit></div>
        <div className="flex w-[150px] items-center border-r border-[#dfe3e6] pl-[7px]"><Fit w={30}>種類</Fit></div>
        <div className="flex w-[100px] items-center border-r border-[#dfe3e6] pl-[7px]"><Fit w={34}>サイズ</Fit></div>
      </div>
      <div className="mt-[8px] ml-[20px] flex w-[747px] flex-col gap-[6px]">
        {rows.map((r) => (
          <div
            key={r.name}
            className={`flex h-[31px] items-center border pt-[2px] pl-[5px] ${r.selected ? 'rounded-[1px] border-black bg-[#c8e3fb] text-[#222]' : 'border-transparent text-[#707070]'}`}
          >
            <div className="flex w-[323px] shrink-0 items-center">
              {r.name === 'saikix' ? <div className="-mt-[2px] -ml-px"><Thumb /></div> : <Folder className="-mt-[3px] mr-px" />}
              <Fit w={r.nw} className="ml-[5px] text-[#222]">{r.name}</Fit>
            </div>
            <Fit w={115}>{r.date}</Fit>
            <div className="ml-[65px] flex w-[140px] gap-[4px]">
              {r.type.map(([t, w]) => <Fit key={t} w={w}>{t}</Fit>)}
            </div>
            {r.size && <Fit w={38} className="ml-[55px]">{r.size}</Fit>}
          </div>
        ))}
      </div>
    </div>
  );
}

function StatusBar() {
  return (
    <div className="flex h-[31px] shrink-0 items-center text-[15px] text-[#3d4660]">
      <Fit w={68} className="ml-[17px]">4 個の項目</Fit>
      <div className="ml-[13px] h-[14px] w-px bg-[#ececec]" />
      <Fit w={109} className="ml-[12px]">1 個の項目を選択</Fit>
      <div className="ml-[13px] h-[14px] w-px bg-[#ececec]" />
      <div className="ml-auto flex h-[31px] w-[31px] items-center justify-center border border-[#2a72b5] bg-[#e1f0fa]">
        <Ico w={14} h={14} className="mt-[1px]">
          <path d="M0 1h14M0 5h14M0 9h14M0 13h14" stroke="#333" strokeWidth="1.100" />
        </Ico>
      </div>
      <Ico w={14} h={14} className="-mt-[2px] mr-[14px] ml-[8px]">
        <path d="M.6.600h12.800v11H.6zM0 13.500h14" stroke="#333" strokeWidth="1.100" />
      </Ico>
    </div>
  );
}

function Explorer() {
  return (
    <div className="absolute top-[114px] left-[115px] flex h-[740px] w-[1406px] flex-col overflow-hidden rounded-lg bg-white ring-1 ring-[#2c3030]">
      <TitleBar />
      <NavBar />
      <CommandBar />
      <div className="flex min-h-0 flex-1">
        <Sidebar />
        <FileList />
      </div>
      <StatusBar />
    </div>
  );
}

export default function App() {
  return (
    <div className="relative flex h-[958px] w-[1612px] flex-col overflow-hidden bg-[#f3f3f3] font-['Open_Sans','Noto_Sans_CJK_JP',sans-serif]">
      <MenuBar />
      <ToolBar />
      <Chart />
      <ChartTabs />
      <Explorer />
    </div>
  );
}
